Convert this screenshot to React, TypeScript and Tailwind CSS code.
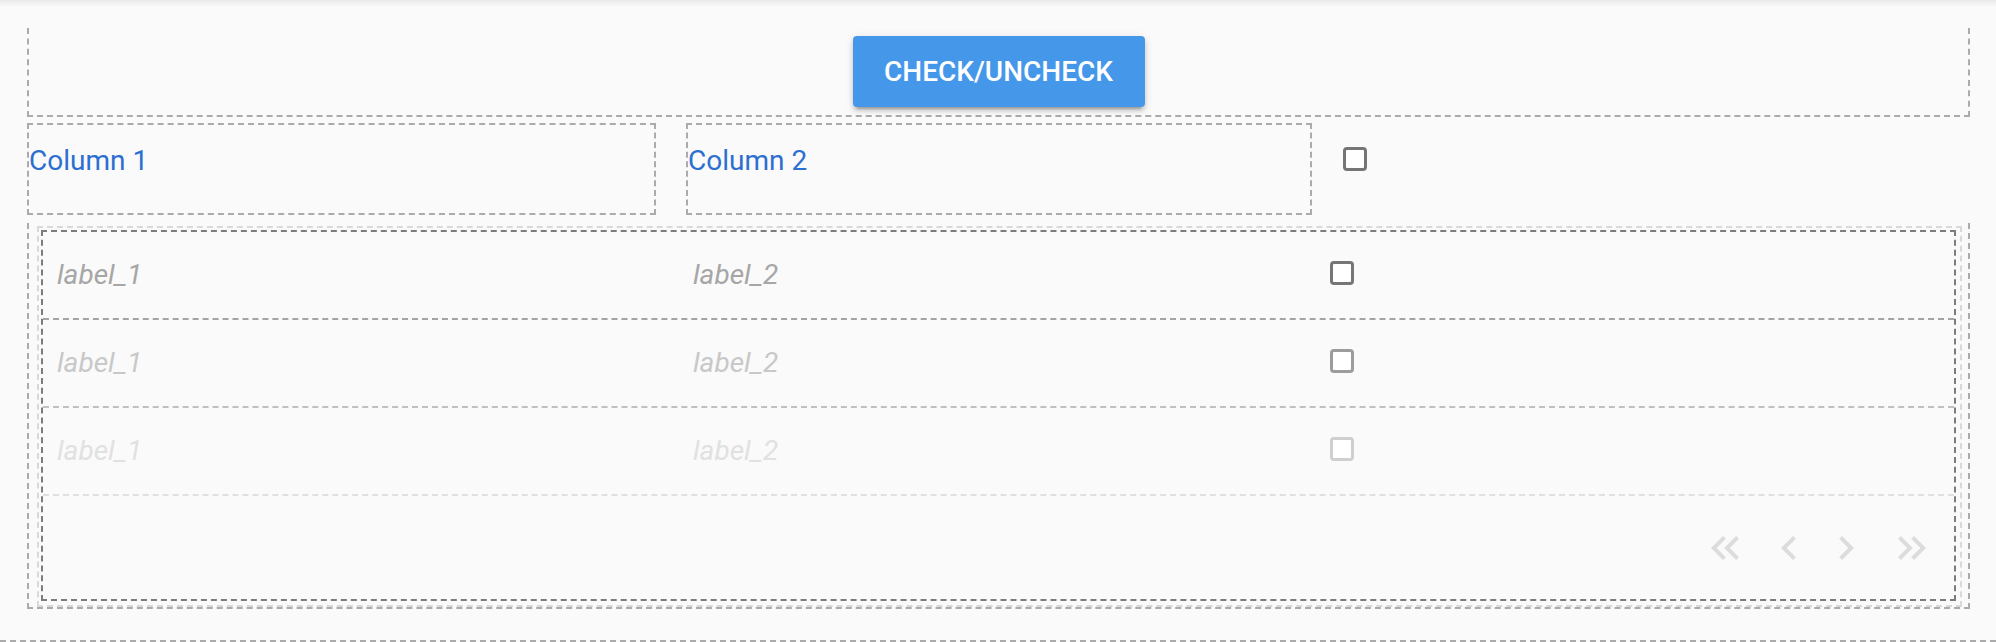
import { useState } from 'react';

type Row = { id: number; text: string; check: string; line: string };

const rows: Row[] = [
  { id: 1, text: 'text-[#a6a6a6]', check: 'border-[#767676]', line: 'border-[#a4a4a4]' },
  { id: 2, text: 'text-[#c8c8c8]', check: 'border-[#9c9c9c]', line: 'border-[#c0c0c0]' },
  { id: 3, text: 'text-[#e1e1e1]', check: 'border-[#cfcfcf]', line: 'border-[#e0e0e0]' },
];

function Box({ className = '' }: { className?: string }) {
  return <div className={`w-[24px] h-[24px] rounded-[4px] border-[3px] bg-white shrink-0 ${className}`} />;
}

function PageIcon({ d, className = '' }: { d: string; className?: string }) {
  return (
    <svg viewBox="0 0 24 24" className={`w-[48px] h-[48px] shrink-0 ${className}`} fill="currentColor">
      <path d={d} />
    </svg>
  );
}

export default function App() {
  const [checked, setChecked] = useState(false);

  return (
    <div className="relative w-full h-[642px] overflow-hidden bg-[#fafafa] font-[Roboto,sans-serif]">
      {/* shadow of the bar above */}
      <div className="absolute top-0 left-0 right-0 h-[7px] bg-linear-to-b from-[#e9e9e9] to-[#fafafa]" />

      <div className="pt-[28px] pl-[27px] pr-[26px]">
        {/* toolbar */}
        <div className="h-[89px] border-x-2 border-b-2 border-dashed border-[#ababab] flex justify-center pt-[8px]">
          <button
            onClick={() => setChecked(!checked)}
            className="w-[292px] h-[71px] rounded-[4px] bg-[#4597ea] text-white text-[28px] font-medium uppercase shadow-[0_6px_2px_-4px_rgba(0,0,0,0.2),0_4px_4px_0_rgba(0,0,0,0.14),0_2px_10px_0_rgba(0,0,0,0.12)]"
          >
            CHECK/UNCHECK
          </button>
        </div>

        {/* header */}
        <div className="mt-[6px] flex items-start">
          <div className="w-[629px] h-[92px] border-2 border-dashed border-[#ababab] pt-[20px] text-[28px] leading-[32px] text-[#2c6fd1]">
            Column 1
          </div>
          <div className="ml-[30px] w-[626px] h-[92px] border-2 border-dashed border-[#ababab] pt-[20px] text-[28px] leading-[32px] text-[#2c6fd1]">
            Column 2
          </div>
          <Box className="ml-[31px] mt-[24px] border-[#757575]" />
        </div>

        {/* list */}
        <div className="mt-[8px] border-x-2 border-b-2 border-dashed border-[#ababab] pt-[3px]">
          <div className="ml-[8px] mr-[6px] border-2 border-dashed border-[#d9d9d9] pt-[2px] pb-[4px] pl-[2px] pr-[4px]">
            <div className="border-2 border-dashed border-[#7c7c7c]">
              {rows.map((row) => (
                <div key={row.id} className={`h-[88px] flex items-center border-b-2 border-dashed ${row.line}`}>
                  <div className={`w-[636px] pl-[14px] italic text-[28px] ${row.text}`}>label_1</div>
                  <div className={`w-[636px] pl-[14px] italic text-[28px] ${row.text}`}>label_2</div>
                  <div className="pl-[15px] mb-[4px]">
                    <Box className={row.check} />
                  </div>
                </div>
              ))}
              <div className="h-[103px] flex items-center justify-end pr-[18px] text-[#dcdcdc]">
                <PageIcon d="M17.59 18L19 16.59 14.42 12 19 7.41 17.59 6l-6 6zM11 18l1.41-1.41L7.83 12l4.58-4.59L11 6l-6 6z" />
                <PageIcon className="ml-[16px]" d="M15.41 7.41L14 6l-6 6 6 6 1.41-1.41L10.83 12z" />
                <PageIcon className="ml-[9px]" d="M10 6L8.59 7.41 13.17 12l-4.58 4.59L10 18l6-6z" />
                <PageIcon className="ml-[18px]" d="M6.41 6L5 7.41 9.58 12 5 16.59 6.41 18l6-6zM13 6l-1.41 1.41L16.17 12l-4.58 4.59L13 18l6-6z" />
              </div>
            </div>
          </div>
        </div>
      </div>

      {/* next section edge */}
      <div className="mt-[31px] border-t-2 border-dashed border-[#ababab]" />
    </div>
  );
}
